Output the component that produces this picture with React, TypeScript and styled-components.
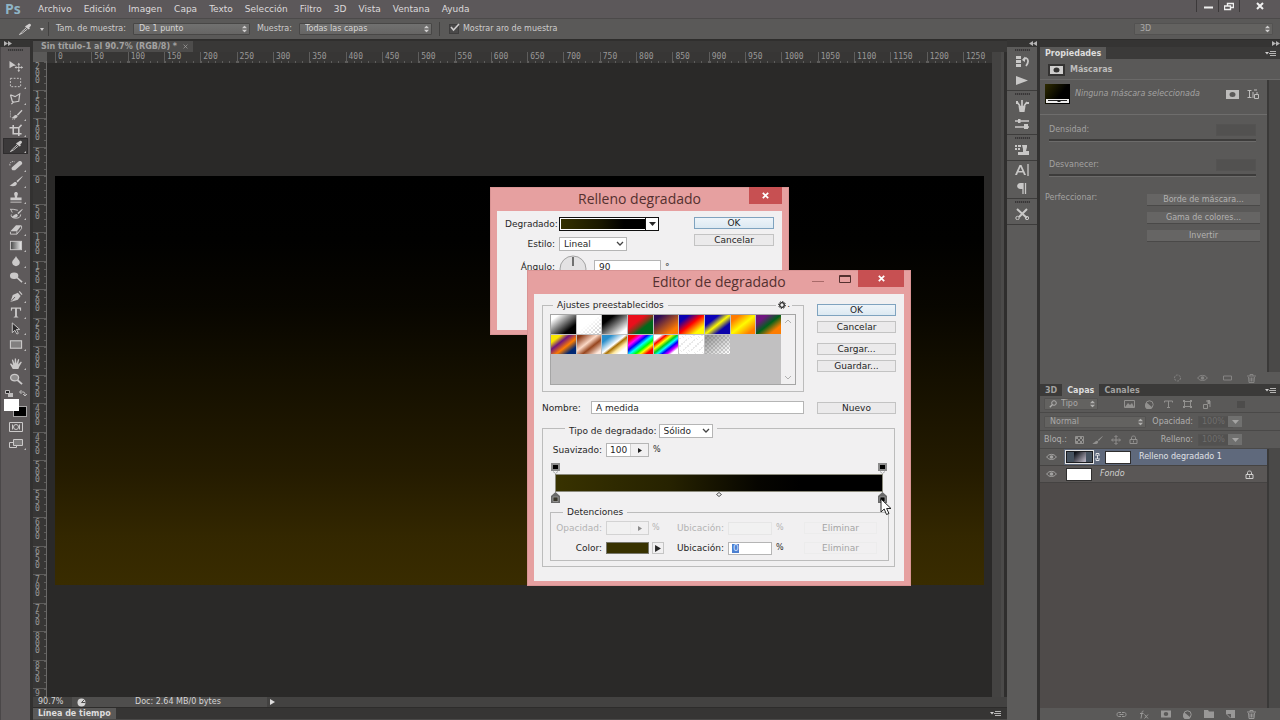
import React from "react";
import styled, { createGlobalStyle, css } from "styled-components";

const Global = createGlobalStyle`
  *, *::before, *::after { box-sizing: border-box; }
  html, body { margin: 0; padding: 0; background: #2a2928; }
  body, button, input, select, fieldset, legend {
    font-family: "DejaVu Sans", Verdana, sans-serif;
    font-size: 8px;
    line-height: 10px;
  }
  button { border: 0; padding: 0; background: none; color: inherit; }
  fieldset { margin: 0; min-width: 0; }
  svg { display: block; flex: none; }
`;

/* ---------- application frame ---------- */

const Shell = styled.div`
  position: relative;
  min-height: 100vh;
  display: flex;
  flex-direction: column;
  color: #cfcdcd;
  background: #353433;
  overflow: hidden;
`;

const MenuBar = styled.header`
  display: flex;
  align-items: center;
  height: 18px;
  padding-left: 5px;
  background: #5c585a;
`;

const Logo = styled.span`
  width: 33px;
  font: 700 14px/16px "Open Sans", "Noto Sans", sans-serif;
  color: #8fb4c6;
`;

const Menus = styled.nav`
  display: flex;
  flex: 1;
  gap: 12px;
`;

const MenuButton = styled.button`
  font-size: 9px;
  line-height: 12px;
  color: #dcdada;
`;

const WindowButton = styled.button<{ $w: number }>`
  display: flex;
  justify-content: center;
  width: ${(p) => p.$w}px;
  height: 12px;
  margin-bottom: 6px;
  border-left: 1px solid #3c393a;
  color: #f0f0f0;
`;

const OptionsBar = styled.div`
  display: flex;
  align-items: center;
  height: 22px;
  padding: 0 7px 0 5px;
  background: #5a5958;
  border-top: 1px solid #4c4a4a;
  border-bottom: 1px solid #2e2d2c;
`;

const Divider = styled.i`
  width: 1px;
  height: 14px;
  background: #424140;
`;

const OptionTool = styled.button`
  display: flex;
  align-items: center;
  gap: 7px;
  width: 43px;
  padding-left: 12px;
`;

const OptionLabel = styled.label`
  display: flex;
  align-items: center;
  gap: 7px;
  margin-left: 7px;
  white-space: nowrap;
`;

const CheckLabel = styled.label`
  display: flex;
  align-items: center;
  gap: 4px;
  margin-left: 9px;
  white-space: nowrap;
`;

const Check = styled.input`
  appearance: none;
  width: 10px;
  height: 10px;
  margin: 0;
  background: #4a4949;
  border: 1px solid #3e3d3d;
`;

const CheckBox = styled.span`
  position: relative;
  display: flex;
  svg { position: absolute; left: 1px; top: -1px; pointer-events: none; }
`;

const SelectWrap = styled.span<{ $w: number }>`
  position: relative;
  display: inline-flex;
  width: ${(p) => p.$w}px;
  svg { position: absolute; right: 3px; top: 50%; transform: translateY(-50%); pointer-events: none; }
`;

const LensBox = styled.span`
  svg { right: auto; left: 5px; }
`;

const DarkSelect = styled.select<{ $dim?: boolean; $pad?: number }>`
  appearance: none;
  width: 100%;
  height: 12px;
  padding: 0 0 0 ${(p) => p.$pad ?? 5}px;
  border: 1px solid ${(p) => (p.$dim ? "#535251" : "#484746")};
  border-radius: 1px;
  background: ${(p) => (p.$dim ? "#636260" : "linear-gradient(#717170, #666564)")};
  color: ${(p) => (p.$dim ? "#a9a8a7" : "#d6d5d5")};
  opacity: 1;
`;

const Spacer = styled.span` flex: 1; `;

const Workspace = styled.div`
  flex: 1;
  display: flex;
  min-height: 680px;
`;

const DockHeader = styled.div`
  display: flex;
  justify-content: flex-end;
  align-items: center;
  height: 7px;
  background: #353433;
  color: #b5b4b4;
`;

/* ---------- tool column ---------- */

const ToolDock = styled.aside`
  display: flex;
  flex-direction: column;
  width: 33px;
  border-right: 3px solid #323130;
  ${DockHeader} { justify-content: flex-start; padding-left: 4px; }
`;

const ToolBody = styled.div`
  flex: 1;
  display: flex;
  flex-direction: column;
  align-items: center;
  background: #5e5a5b;
  border-left: 1px solid #4a4748;
`;

const Grip = styled.i`
  width: 15px;
  height: 2px;
  margin: 2px 0;
  background: repeating-linear-gradient(90deg, #383737 0 1px, #514e4f 1px 2px);
`;

const ToolGroup = styled.div`
  display: flex;
  flex-direction: column;
  padding-bottom: 3px;
  &:first-of-type { padding-top: 5px; }
`;

const ToolButton = styled.button<{ $on?: boolean; $plain?: boolean }>`
  position: relative;
  display: flex;
  align-items: center;
  justify-content: center;
  width: 25px;
  height: 16px;
  color: #cbc9c9;
  ${(p) => p.$on && css`background: #3b393a; box-shadow: inset 0 0 0 1px #2f2d2e;`}
  &::after {
    content: "";
    display: ${(p) => (p.$plain ? "none" : "block")};
    position: absolute;
    right: 2px;
    bottom: 1px;
    border: 1px solid #bdbbbb;
    border-left-color: transparent;
    border-top-color: transparent;
  }
`;

const MiniRow = styled.div`
  display: flex;
  justify-content: space-between;
  width: 22px;
  height: 9px;
  color: #bdbbbb;
`;

const Colours = styled.div`
  display: grid;
  grid-template: 12px 6px / 9px 6px 8px;
  margin-bottom: 2px;
`;

const Chip = styled.button<{ $back?: boolean }>`
  background: ${(p) => (p.$back ? "#000" : "#fff")};
  grid-area: ${(p) => (p.$back ? "1 / 2 / 3 / 4" : "1 / 1 / 2 / 3")};
  ${(p) => p.$back ? css`margin-top: 7px; border: 1px solid #a8a6a6;` : css`z-index: 1;`}
`;

/* ---------- document ---------- */

const Doc = styled.main`
  flex: 1;
  min-width: 0;
  display: flex;
  flex-direction: column;
`;

const TabStrip = styled.div`
  display: flex;
  height: 12px;
  background: #393837;
  border-top: 1px solid #302f2e;
`;

const Tab = styled.div<{ $active?: boolean }>`
  display: flex;
  align-items: center;
  padding: 1px 5px 0;
  font-weight: 700;
  white-space: nowrap;
  background: ${(p) => (p.$active ? "#5a5958" : "transparent")};
  color: ${(p) => (p.$active ? "#dedddd" : "#a3a2a1")};
`;

const DocTab = styled(Tab)`
  gap: 6px;
  padding: 0 5px 0 8px;
  background: #4d4c4b;
`;

const DocArea = styled.div`
  flex: 1;
  display: grid;
  grid-template-columns: 14px 1fr 15px;
  grid-template-rows: 11px 1fr;
`;

const RulerCorner = styled.div` background: #5a5958; `;

const HRuler = styled.div`
  display: grid;
  grid-template-columns: 8px repeat(25, 1fr) 29px;
  background: #373635;
  color: #999897;
  font-family: "DejaVu Sans Mono", monospace;
  overflow: hidden;
`;

const HMark = styled.span`
  padding-left: 2px;
  line-height: 10px;
  border-left: 1px solid #5e5d5c;
  background: repeating-linear-gradient(90deg, #5e5d5c 0 1px, transparent 1px 7px) 0 100% / 100% 2px no-repeat;
`;

const VRuler = styled.div`
  display: grid;
  grid-template-rows: repeat(22, 1fr) 9px;
  margin-top: -2px;
  background: #373635;
  border-right: 1px solid #6a6968;
  color: #999897;
  font-family: "DejaVu Sans Mono", monospace;
  text-align: center;
`;

const VMark = styled.span`
  display: flex;
  flex-direction: column;
  align-items: center;
  padding: 1px 4px 0 0;
  line-height: 7px;
  border-top: 1px solid #5e5d5c;
  background: repeating-linear-gradient(#5e5d5c 0 1px, transparent 1px 7px) 100% 0 / 2px 100% no-repeat;
`;

const Viewport = styled.div`
  display: flex;
  padding: 113px 8px 112px;
  background: #2a2928;
`;

const Artboard = styled.div`
  flex: 1;
  background: linear-gradient(#000 0%, #010100 16%, #080600 32%, #151000 50%, #241b00 72%, #332700 88%, #392c00 100%);
`;

const Gutter = styled.div`
  grid-row: 1 / 3;
  grid-column: 3;
  background: linear-gradient(90deg, #444342 0 9px, #4b4a49 9px 12px, #2f2e2d 12px);
`;

const StatusBar = styled.div`
  display: flex;
  align-items: center;
  height: 11px;
  padding-left: 5px;
  background: #434241;
  border-bottom: 1px solid #2d2c2b;
`;

const Zoom = styled.span` width: 34px; color: #d5d4d4; `;

const StatusInfo = styled.div`
  display: flex;
  align-items: center;
  width: 195px;
  height: 10px;
  padding-left: 5px;
  background: #4f4e4d;
  color: #d5d4d4;
  span { margin-left: 49px; }
`;

const StatusArrow = styled.button`
  display: flex;
  justify-content: center;
  width: 11px;
  color: #dedddd;
`;

const Timeline = styled.div`
  display: flex;
  align-items: stretch;
  justify-content: space-between;
  height: 12px;
  padding-right: 6px;
  background: #363534;
  border-bottom: 1px solid #4a4948;
`;

/* ---------- icon strip ---------- */

const Strip = styled.aside`
  display: flex;
  flex-direction: column;
  width: 33px;
  border-right: 3px solid #323130;
`;

const StripBody = styled.div`
  flex: 1;
  background: #5c5b5a;
`;

const StripGroup = styled.div`
  display: flex;
  flex-direction: column;
  align-items: center;
  padding-bottom: 1px;
  border-bottom: 1px solid #3d3c3b;
`;

const StripButton = styled.button`
  display: flex;
  align-items: center;
  justify-content: center;
  width: 24px;
  height: 18px;
  color: #c9c8c7;
`;

/* ---------- right panels ---------- */

const Panels = styled.aside`
  display: flex;
  flex-direction: column;
  width: 240px;
`;

const PanelTabs = styled.div`
  display: flex;
  align-items: stretch;
  height: 12px;
  padding-right: 4px;
  background: #3b3a39;
  button { margin-left: auto; }
`;

const PanelTitle = styled.h2`
  display: flex;
  align-items: center;
  gap: 5px;
  height: 21px;
  margin: 0;
  padding: 1px 0 0 8px;
  font-size: 8px;
  color: #bdbcbb;
  background: #5a5958;
  border-bottom: 1px solid #6a6968;
`;

const WithScroll = styled.div<{ $h?: number }>`
  display: grid;
  grid-template-columns: 1fr 13px;
  ${(p) => (p.$h ? css`height: ${p.$h}px;` : css`flex: 1;`)}
  background: linear-gradient(90deg, #3a3938 0 2px, #4a4948 2px) 100% 0 / 13px 100% no-repeat ${(p) => (p.$h ? "#5a5958" : "#4f4b4a")};
`;

const Props = styled.section`
  display: flex;
  flex-direction: column;
  color: #a3a2a1;
`;

const MaskRow = styled.div`
  display: flex;
  align-items: center;
  height: 35px;
  padding: 0 5px 6px 5px;
  border-bottom: 1px solid #6e6d6c;
  em { flex: 1; margin-left: 5px; white-space: nowrap; }
`;

const IconButton = styled.button`
  display: flex;
  align-items: center;
  justify-content: center;
  width: 20px;
  color: #bdbcbb;
`;

const SliderRow = styled.div`
  display: flex;
  flex-wrap: wrap;
  align-items: center;
  justify-content: space-between;
  height: 18px;
  margin: 9px 11px 8px 9px;
`;

const DarkField = styled.input<{ $w: number }>`
  width: ${(p) => p.$w}px;
  height: 12px;
  padding: 0 3px;
  border: 1px solid #545352;
  background: #525150;
  color: #6f6e6d;
`;

const Range = styled.input`
  appearance: none;
  width: 100%;
  height: 3px;
  margin: 2px 0 0;
  background: #3d3c3b;
  border-bottom: 1px solid #6c6b6a;
  &::-webkit-slider-thumb { appearance: none; width: 0; height: 0; }
`;

const Refine = styled.div`
  display: flex;
  justify-content: space-between;
  margin: 8px 7px 0 5px;
`;

const RefineButtons = styled.div`
  display: grid;
  gap: 6px;
  width: 113px;
  margin-top: 1px;
`;

const DarkButton = styled.button`
  height: 12px;
  background: #666564;
  border-bottom: 1px solid #4a4948;
  color: #b3b2b1;
`;

const PanelFoot = styled.div<{ $gap: number; $right: number; $dim?: boolean }>`
  display: flex;
  align-items: center;
  justify-content: flex-end;
  gap: ${(p) => p.$gap}px;
  height: 12px;
  padding-right: ${(p) => p.$right}px;
  color: ${(p) => (p.$dim ? "#858483" : "#999897")};
  background: #5a5958;
`;

const LayerBar = styled.div<{ $h?: number }>`
  display: flex;
  align-items: center;
  height: ${(p) => p.$h ?? 18}px;
  padding: 0 4px;
  color: #b0afae;
  background: #5a5958;
  border-bottom: 1px solid #4a4948;
`;

const BarIcons = styled.div<{ $gap: number; $left: number }>`
  display: flex;
  align-items: center;
  gap: ${(p) => p.$gap}px;
  margin-left: ${(p) => p.$left}px;
  color: #92918f;
`;

const FilterSwitch = styled.button`
  width: 8px;
  height: 7px;
  margin: 0 31px 0 auto;
  background: #4d4c4b;
`;

const Percent = styled.label`
  display: flex;
  align-items: center;
  gap: 5px;
  margin-left: auto;
  white-space: nowrap;
`;

const Drop = styled.button`
  display: flex;
  align-items: center;
  justify-content: center;
  width: 14px;
  height: 11px;
  margin: 0 34px 0 -5px;
  background: #70706f;
  color: #a5a4a3;
  z-index: 1;
`;

const LayerList = styled.ul`
  margin: 0;
  padding: 0;
  list-style: none;
`;

const Layer = styled.li<{ $on?: boolean }>`
  display: flex;
  align-items: center;
  height: 17px;
  background: ${(p) => (p.$on ? "linear-gradient(90deg, #5a5958 0 24px, #5f697c 24px)" : "#5a5756")};
  border-bottom: 1px solid #454342;
  color: ${(p) => (p.$on ? "#e0e2e6" : "#d0cfce")};
  button { width: 23px; display: flex; justify-content: center; color: #a3a2a1; }
`;

const Thumb = styled.span<{ $kind: "fill" | "mask" | "white" }>`
  width: ${(p) => (p.$kind === "fill" ? 29 : 26)}px;
  height: ${(p) => (p.$kind === "fill" ? 14 : 13)}px;
  margin-left: ${(p) => (p.$kind === "white" ? 3 : 2)}px;
  ${(p) => p.$kind === "mask" && css`margin-left: 4px;`}
  background: #fff;
  border: 1px solid #2f2e2e;
  ${(p) => p.$kind === "fill" && css`
    border: 1px solid #e4e4e4;
    box-shadow: inset 0 0 0 1px #1c1d20;
    background: linear-gradient(135deg, #10131a 10%, #b3aebc 90%) 8px 1px / 12px 10px no-repeat, #46525f;
  `}
`;

const LayerName = styled.span` margin-left: 8px; flex: 1; `;

const LayerLock = styled.span` margin-right: 13px; `;

/* ---------- dialogs ---------- */

const Dialog = styled.section<{ $x: number; $y: number; $w: number; $h: number }>`
  position: absolute;
  left: ${(p) => p.$x}px;
  top: ${(p) => p.$y}px;
  width: ${(p) => p.$w}px;
  height: ${(p) => p.$h}px;
  display: flex;
  flex-direction: column;
  padding: 0 7px 5px;
  background: #e6a0a0;
  box-shadow: inset 0 0 0 1px #d99494;
  color: #262626;
  font-size: 9px;
  button, input, select, legend, label { font-size: 9px; }
`;

const TitleBar = styled.div`
  position: relative;
  height: 24px;
  display: flex;
  justify-content: flex-end;
`;

const Title = styled.h1`
  position: absolute;
  inset: 0;
  margin: 0;
  font: 400 14px/24px "Open Sans", "Noto Sans", sans-serif;
  text-align: center;
  color: #54302f;
`;

const Caption = styled.button<{ $w: number; $close?: boolean }>`
  z-index: 1;
  display: flex;
  align-items: center;
  justify-content: center;
  width: ${(p) => p.$w}px;
  height: 17px;
  color: ${(p) => (p.$close ? "#fff" : "#54302f")};
  background: ${(p) => (p.$close ? "#c75052" : "transparent")};
`;

const FillBody = styled.div`
  flex: 1;
  display: flex;
  justify-content: space-between;
  padding: 6px 8px;
  background: #f1f0f1;
`;

const FillForm = styled.div`
  display: grid;
  grid-template-columns: 50px auto auto;
  grid-template-rows: 14px 14px 26px;
  gap: 6px 4px;
  align-items: center;
  justify-content: start;
  label { text-align: right; white-space: nowrap; }
`;

const Wide = styled.div`
  grid-column: 2 / 4;
  display: flex;
  align-items: center;
`;

const AngleRow = styled.div`
  grid-column: 1 / 4;
  align-self: start;
  display: flex;
  align-items: center;
  gap: 4px;
  margin-top: -2px;
  label { width: 50px; margin-bottom: 5px; }
  input { margin: 0 0 5px 3px; }
  span { margin-bottom: 5px; }
`;

const GradientPick = styled.button`
  display: flex;
  width: 100px;
  height: 14px;
  border: 1px solid #111;
  background: #fff;
  &::before {
    content: "";
    flex: 1;
    margin: 1px 0 1px 1px;
    background: linear-gradient(90deg, #343000, #1b1900 45%, #000 75%);
  }
`;

const PickArrow = styled.span`
  display: flex;
  align-items: center;
  justify-content: center;
  width: 13px;
  border-left: 1px solid #111;
`;

const LightSelect = styled.select`
  appearance: none;
  width: 100%;
  height: 14px;
  padding: 0 0 0 4px;
  border: 1px solid #b5b5b5;
  background: #fff;
  color: #262626;
`;

const Field = styled.input<{ $w?: number; $ghost?: boolean }>`
  width: ${(p) => (p.$w ? `${p.$w}px` : "100%")};
  min-width: 0;
  height: 13px;
  padding: 0 4px;
  border: 1px solid ${(p) => (p.$ghost ? "#e6e6e6" : "#b5b5b5")};
  background: ${(p) => (p.$ghost ? "#f1f1f1" : "#fff")};
  color: #262626;
`;

const Stack = styled.div<{ $w?: number; $top?: number }>`
  display: flex;
  flex-direction: column;
  gap: 5px;
  padding-top: ${(p) => p.$top ?? 0}px;
  ${(p) => p.$w && css`width: ${p.$w}px;`}
`;

const PushButton = styled.button<{ $main?: boolean; $ghost?: boolean; $after?: number }>`
  width: 100%;
  height: 12px;
  margin-bottom: ${(p) => p.$after ?? 0}px;
  border: 1px solid ${(p) => (p.$ghost ? "#ececec" : p.$main ? "#7fa3bf" : "#c3c3c3")};
  background: ${(p) => (p.$ghost ? "#f1f0f1" : p.$main ? "linear-gradient(#eef4f9, #dce9f2)" : "#ebeaeb")};
  color: ${(p) => (p.$ghost ? "#a5a5a5" : "#1e1e1e")};
  line-height: 9px;
`;

const EditorBody = styled.div`
  flex: 1;
  padding: 6px 8px 0;
  background: #f1f0f1;
`;

const EditorTop = styled.div`
  display: grid;
  grid-template-columns: 1fr 79px;
  gap: 13px;
`;

const Frame = styled.fieldset<{ $pad: string }>`
  position: relative;
  padding: ${(p) => p.$pad};
  border: 1px solid #bcbcbc;
`;

const Legend = styled.legend<{ $left: number; $h: number }>`
  display: flex;
  align-items: flex-start;
  gap: 2px;
  height: ${(p) => p.$h}px;
  margin-left: ${(p) => p.$left}px;
  padding: 0 4px;
  white-space: nowrap;
  label { padding-top: 2px; }
`;

const Gear = styled.button`
  position: absolute;
  right: 11px;
  top: -11px;
  display: flex;
  align-items: flex-end;
  gap: 1px;
  padding: 0 2px;
  background: #f1f0f1;
`;

const PresetBox = styled.div`
  display: grid;
  grid-template-columns: 1fr 14px;
  height: 71px;
  border: 1px solid #a5a5a5;
  background: #c1c0c1;
`;

const PresetGrid = styled.div`
  display: grid;
  grid-template-columns: repeat(9, 1fr);
  grid-auto-rows: 19px;
  gap: 1px;
  align-content: start;
`;

const Preset = styled.button<{ $bg: string }>` background: ${(p) => p.$bg}; `;

const PresetScroll = styled.div`
  display: flex;
  flex-direction: column;
  align-items: center;
  justify-content: space-between;
  padding: 4px 0;
  color: #b0b0b0;
  background: #f1f0f1;
`;

const NameRow = styled.div`
  display: grid;
  grid-template-columns: 45px 1fr;
  gap: 4px;
  align-items: center;
  margin-top: 9px;
`;

const Lower = styled.div` margin: 10px 1px 0 0; `;

const SmoothRow = styled.div`
  display: flex;
  align-items: center;
  gap: 4px;
  height: 14px;
  label { width: 52px; text-align: right; white-space: nowrap; }
`;

const Spin = styled.span<{ $w: number; $dim?: boolean }>`
  display: flex;
  width: ${(p) => p.$w}px;
  height: 14px;
  border: 1px solid ${(p) => (p.$dim ? "#d3d3d3" : "#b5b5b5")};
  color: ${(p) => (p.$dim ? "#8c8c8c" : "#1e1e1e")};
  input { flex: 1; height: 12px; padding: 0 2px 0 3px; border: 0; }
  button { width: 18px; display: flex; align-items: center; justify-content: center; background: #f1f0f1; border-left: 1px solid ${(p) => (p.$dim ? "#ececec" : "#d0d0d0")}; }
`;

const Ramp = styled.div` padding: 6px 2px 4px 1px; `;

const StopRow = styled.div`
  display: flex;
  justify-content: space-between;
  height: 11px;
`;

const RampBar = styled.div`
  height: 18px;
  margin: 0 4px;
  border: 1px solid #8b8a7c;
  background: linear-gradient(90deg, #383200, #262200 35%, #060500 62%, #000 75%);
`;

const StopGrid = styled.div`
  display: grid;
  grid-template-columns: 51px 58px 56px 44px 24px 73px;
  grid-auto-rows: 14px;
  gap: 6px 4px;
  align-items: center;
  label { text-align: right; white-space: nowrap; }
`;

const Muted = styled.label` color: #b3b3b3; `;
const MutedText = styled.span` color: #b3b3b3; `;

const Cell = styled.div`
  display: flex;
  align-items: center;
  gap: 3px;
`;

const ColourWell = styled.button`
  width: 43px;
  height: 12px;
  border: 1px solid #77776c;
  background: #383200;
`;

const ArrowBox = styled.button`
  display: flex;
  align-items: center;
  justify-content: center;
  width: 12px;
  height: 12px;
  border: 1px solid #c5c5c5;
`;

const Selected = styled(Field)`
  color: #cfe0ff;
  background: linear-gradient(90deg, transparent 3px, #4c7fd0 3px 10px, transparent 10px) 0 1px / 100% 9px no-repeat #fff;
`;

const Pointer = styled.svg`
  position: absolute;
  left: 353px;
  top: 228px;
`;

/* ---------- drawings ---------- */

const Svg = ({ w, h, vb, children }: { w: number; h: number; vb?: string; children: React.ReactNode }) => (
  <svg width={w} height={h} viewBox={vb ?? `0 0 ${w} ${h}`} fill="none" stroke="currentColor" strokeWidth="1" aria-hidden="true">
    {children}
  </svg>
);

const solid = { fill: "currentColor", stroke: "none" };

const UpDown = () => <Svg w={5} h={7}><path {...solid} d="M0 2.7 2.5 0 5 2.7zM0 4.3 2.5 7 5 4.3z" /></Svg>;
const Chevron = () => <Svg w={8} h={6}><path d="M1 1l3 3 3-3" stroke="#444" strokeWidth="1.3" /></Svg>;
const Down = () => <Svg w={7} h={4}><path {...solid} d="M0 0h7L3.500 4z" /></Svg>;
const Right = ({ s = 5 }: { s?: number }) => <Svg w={s} h={s + 1} vb="0 0 5 6"><path {...solid} d="M0 0l5 3-5 3z" /></Svg>;
const Double = ({ left }: { left?: boolean }) => (
  <Svg w={8} h={5}><path {...solid} d={left ? "M4 0v5L0 2.500zM8 0v5L4 2.500z" : "M0 0v5l4-2.500zM4 0v5l4-2.500z"} /></Svg>
);
const FlyOut = () => (
  <Svg w={11} h={7}><path {...solid} d="M0 2h4L2 4.500z" /><path d="M5 1.500h6M4 3.500h7M5 5.500h6" stroke="#b5b4b3" /></Svg>
);
const Cross = ({ s = 7, t = 1.7 }: { s?: number; t?: number }) => (
  <Svg w={s} h={s} vb="0 0 7 7"><path d="M.8.8l5.400 5.400M6.200.8L.8 6.200" strokeWidth={t} /></Svg>
);

const toolArt: Record<string, React.ReactNode> = {
  Mover: <><path {...solid} d="M1 1l7 5-3 .4L1 9z" /><path d="M11 4v8M7 8h8" /><path {...solid} d="M11 3l1.500 2h-3zM11 13l1.500-2h-3zM15.500 8l-2-1.500v3zM6.500 8l2-1.500v3z" /></>,
  Marco: <rect x="2" y="2.500" width="11" height="9" strokeDasharray="2 1.500" />,
  Lazo: <path d="M2 3l5 2 5-3-1 8-6 1-2 2M2 3l2 7 1.500 1" strokeWidth="1.300" />,
  "Selección rápida": <><path d="M2 3v8M4 12h4" strokeDasharray="1 1" /><path {...solid} d="M14 2L9 7l1 1.300L15 3zM8.500 7.500c-3 0-3 2.500-5.500 3 2 1.500 6 1 6.800-1.600z" /></>,
  Recortar: <path d="M5 1v9.500h9M1 4h10v9M11 4l3-3" strokeWidth="1.700" />,
  Cuentagotas: <><path {...solid} d="M10 2.500L12 1c1.500-.8 3 .6 2.300 2L12.500 5l.8.900-1.300 1L8 4l1-1z" /><path d="M9.500 5L4 10l-2 2.500L5 11l5.500-4.500" /></>,
  Corrector: <><path {...solid} d="M4 8.500l7-6c2-1.500 5 1.500 3 3.500l-7 6C4 13 2 10.500 4 8.500z" /><path d="M1.500 7c-1-3 2-5 5-4" strokeDasharray="1.500 1" /></>,
  Pincel: <path {...solid} d="M15 1L8.500 6.500l1.300 1.500L15 2zM8 7.500C5 7 4.500 10.500 1 11c2.500 2 8 1.500 8-2z" />,
  Tampón: <><path {...solid} d="M6 3c0-2.500 4-2.500 4 0 0 1.500-.8 2-.8 4H14v3H2V7h4.800C6.800 5 6 4.500 6 3z" /><path d="M2 12h12" /></>,
  Historial: <><path {...solid} d="M15 2L9.500 6.500l1.200 1.300L15 3zM9 7.500C6 7 5.500 10 3 10.500c2 1.700 7 1.500 7-1.500z" /><path d="M2 2.500h3l5 1M2 2l2 4M3 8c-1 3 2 4 5 4s5-1 5-4" /></>,
  Borrador: <><path {...solid} d="M2 9l6-6.500h6L9 9z" /><path d="M2 9.500v2.500h7l5-6V3M9 9v3" /></>,
  Degradado: <><defs><linearGradient id="toolGrad"><stop stopColor="#444" /><stop offset="1" stopColor="#eee" /></linearGradient></defs><rect x="2" y="2.500" width="12" height="9" fill="url(#toolGrad)" /></>,
  Desenfocar: <path {...solid} d="M8 1c1 3 5 5 4 8-1 4-7 4-8 0C3 6 7 4 8 1z" />,
  Sobreexponer: <><ellipse {...solid} cx="6" cy="5" rx="4.500" ry="3.500" /><path d="M9 7l5.500 5" strokeWidth="1.800" /></>,
  Pluma: <><path {...solid} d="M2 13L4.500 5.500 10 3l3 3.500-3 4zM11 2l1-1 3 3.500-1 1z" /><path d="M2.500 12.500l4.500-5" stroke="#5e5a5b" /></>,
  Texto: <path {...solid} d="M2.500 1.500h11V5h-1L12 3H9v8l1.500.8v.7h-5v-.7L7 11V3H4l-.5 2h-1z" />,
  Trazado: <path d="M4 1v10.500l2.800-2.600L9 13l1.500-.8L8.500 8H12z" fill="#2e2c2d" />,
  Rectángulo: <rect x="2" y="3" width="12" height="8" fill="#828080" strokeWidth="1.200" />,
  Mano: <path {...solid} d="M4.500 13L1.500 7.500l1-.8L5 9 3.500 3l1.200-.4L6.500 7 6.700 1.500H8L8.500 7l1.800-4.800 1.200.4L10.300 8l3-3.200 1 .8-2.800 5-1 2.400z" />,
  Zoom: <><ellipse cx="6.500" cy="5" rx="4.300" ry="3.500" fill="#8f8d8d" strokeWidth="1.400" /><path d="M9.500 7.500l5 4.500" strokeWidth="2" /></>,
};

const ToolIcon = ({ name }: { name: string }) => <Svg w={16} h={13} vb="0 0 16 14">{toolArt[name]}</Svg>;

const groups = [
  ["Mover", "Marco", "Lazo", "Selección rápida", "Recortar", "Cuentagotas"],
  ["Corrector", "Pincel", "Tampón", "Historial", "Borrador", "Degradado", "Desenfocar", "Sobreexponer"],
  ["Pluma", "Texto", "Trazado", "Rectángulo"],
  ["Mano", "Zoom"],
];

const MaskIcon = ({ w = 13, h = 9 }: { w?: number; h?: number }) => (
  <Svg w={w} h={h} vb="0 0 13 9"><path {...solid} fillRule="evenodd" d="M0 0h13v9H0zM6.500 2a3 2.500 0 100 5 3 2.500 0 000-5z" /></Svg>
);
const Eye = () => (
  <Svg w={11} h={8}><path d="M.7 4c2-3.500 7.600-3.500 9.600 0-2 3.300-7.600 3.300-9.600 0z" /><circle {...solid} cx="5.500" cy="4" r="1.800" /></Svg>
);
const Lock = () => <Svg w={9} h={9}><path d="M2.500 4V2.500c0-2 4-2 4 0V4M1 4.500h7v4H1zM4.500 5.500v2" /></Svg>;
const Lens = () => <Svg w={8} h={8}><circle cx="5" cy="3" r="2.300" /><path d="M3.500 4.500L.8 7.200" strokeWidth="1.300" /></Svg>;
const Adjust = () => <Svg w={9} h={9}><circle cx="4.500" cy="4.500" r="3.700" /><path {...solid} d="M1.500 2.500l6 5A4 4 0 111.500 2.500z" /></Svg>;
const Trash = () => <Svg w={9} h={9}><path d="M0 2h9M3 2V.5h3V2M1.500 3l.5 5.500h5L7.500 3M4.500 3.500v4M3 3.500v4M6 3.500v4" /></Svg>;
const TextT = () => <Svg w={9} h={8}><path d="M.5 2.500V1h8v1.500M4.500 1v6.500M3 7.500h3" /></Svg>;
const Star = () => <Svg w={9} h={8}><path d="M1.500 1.500h6v5h-6z" /><path {...solid} d="M0 0h2v2H0zM7 0h2v2H7zM0 6h2v2H0zM7 6h2v2H7z" /></Svg>;
const Picture = () => <Svg w={11} h={8}><path d="M.5.5h10v7H.5z" /><path {...solid} d="M1 7l3-4 2 2 2-2 2 4z" /></Svg>;
const Smart = () => <Svg w={9} h={9}><path d="M1.500 4.500v4h4v-4zM4 1h4v6" /><path {...solid} d="M5.500 0H8v4H5.500z" /></Svg>;
const Brush = () => <Svg w={11} h={8} vb="1 1 14 11">{toolArt.Pincel}</Svg>;
const MoveCross = () => <Svg w={10} h={10}><path d="M5 1v8M1 5h8M3.500 2L5 .5 6.500 2M3.500 8L5 9.500 6.500 8M2 3.500L.5 5 2 6.500M8 3.500L9.500 5 8 6.500" /></Svg>;
const Checkers = () => <Svg w={9} h={8}><path {...solid} d="M1 1h2v2H1zM5 1h2v2H5zM3 3h2v2H3zM7 3h1v2H7zM1 5h2v2H1zM5 5h2v2H5z" /><path d="M.5.5h8v7h-8z" /></Svg>;

const stripArt: React.ReactNode[][] = [
  [
    <><path {...solid} d="M1 0h5v3H1zM1 4h5v3H1zM1 8h5v3H1z" /><path d="M8 4l3-2c3 1 2.500 5 0 8" strokeWidth="1.800" /><path {...solid} d="M7 4l3-3.500V6z" /></>,
    <path {...solid} d="M1 2l12 4.500L1 11z" />,
  ],
  [
    <><path {...solid} d="M3.500 6h7l-1 6h-5z" /><path d="M5 6L2 2M7 6V0M9 6l3-4" strokeWidth="1.700" /><path {...solid} d="M1 1h2v3H1zM11 2h3v2h-3z" /></>,
    <><path d="M0 3h14M0 9h14" strokeWidth="1.600" /><path {...solid} d="M3 1h2.500v4H3zM9 6h4v5H9z" /></>,
  ],
  [<><path {...solid} d="M0 1h2v2H0zM3 1h3v2H3zM0 4h2v2H0zM3 4h2v2H3zM7 1h5v2l-1 4h3v4H3V8h5V5z" /></>],
  [
    <><path {...solid} fillRule="evenodd" d="M0 11L4.500 1h2L11 11H9L8 8.500H3L2 11zM3.700 7h3.600L5.500 3z" /><path d="M13 0v12" strokeWidth="1.300" /></>,
    <><path {...solid} d="M8 1H5.500C1 1 1 7 5.500 7H8z" /><path d="M8 1v11M10.500 1v11" strokeWidth="1.300" /></>,
  ],
  [<><path d="M2 1l10 9M12 1L4 9" strokeWidth="2" /><circle cx="2.500" cy="10" r="1.700" /><circle cx="12" cy="10" r="1.700" /></>],
];

/* ---------- data ---------- */

const menus = ["Archivo", "Edición", "Imagen", "Capa", "Texto", "Selección", "Filtro", "3D", "Vista", "Ventana", "Ayuda"];
const hMarks = Array.from({ length: 26 }, (_, i) => i * 50);
const vMarks = [...Array.from({ length: 22 }, (_, i) => String(Math.abs(i * 50 - 200))), "9"];

const checker = "repeating-conic-gradient(#c9c9c9 0 25%, #fff 0 50%) 0 0 / 4px 4px";
const diag = (stops: string) => `linear-gradient(142deg, ${stops})`;
const presets: [string, string][] = [
  ["Frontal a fondo", diag("#fff 15%, #000 75%")],
  ["Frontal a transparente", `${diag("#fff 45%, #fff0 100%")}, ${checker}`],
  ["Negro, blanco", diag("#000 25%, #fff 85%")],
  ["Rojo, verde", diag("#ea0f1c 35%, #7a3a1a 52%, #00691a 65%")],
  ["Violeta, naranja", diag("#2b0a57 15%, #ff7a00 80%")],
  ["Azul, rojo, amarillo", diag("#0a00b2 20%, #ff0000 48%, #fffc00 80%")],
  ["Azul, amarillo, azul", diag("#0b01b8 28%, #fdfa00 50%, #0b02aa 72%")],
  ["Naranja, amarillo, naranja", diag("#ff7c00 18%, #fffb00 50%, #ff7c00 85%")],
  ["Violeta, verde, naranja", diag("#6f1580 22%, #00601b 50%, #fd7c00 78%")],
  ["Amarillo, violeta, naranja, azul", diag("#f9e600 20%, #6f1580 38%, #fd7c00 60%, #002874 82%")],
  ["Cobre", diag("#8a3a18 10%, #fbd8c5 42%, #97461f 62%, #ffe9dd 90%")],
  ["Cromo", diag("#298ecb 20%, #fff 48%, #a86f01 56%, #ffe9a0 70%, #fff 82%")],
  ["Espectro", diag("#f00 15%, #f0f 28%, #00f 40%, #0ff 52%, #0f0 64%, #ff0 74%, #f00 86%")],
  ["Arco iris transparente", diag("#fff 15%, #f00 25%, #ff0 37%, #0c2 48%, #0ff 57%, #00f 67%, #c0f 77%, #fff 86%")],
  ["Rayas transparentes", `repeating-linear-gradient(142deg, #fff 0 3px, #fff9 3px 5px), ${checker}`],
  ["Densidad neutra", `${diag("#777b 10%, #fff3 95%")}, ${checker}`],
];

/* ---------- parts ---------- */

function AppSelect({ w, value, label, dim, lens }: { w: number; value: string; label: string; dim?: boolean; lens?: boolean }) {
  return (
    <SelectWrap $w={w}>
      <DarkSelect aria-label={label} $dim={dim} $pad={lens ? 16 : 5} disabled={dim}><option>{value}</option></DarkSelect>
      {lens && <LensBox><Lens /></LensBox>}
      <UpDown />
    </SelectWrap>
  );
}

function Tools() {
  return (
    <ToolDock>
      <DockHeader><Double /></DockHeader>
      <ToolBody>
        <Grip />
        {groups.map((g, i) => (
          <ToolGroup key={i}>
            {g.map((n) => (
              <ToolButton key={n} aria-label={n} $on={n === "Cuentagotas"} $plain={n === "Zoom" || n === "Mover"}>
                <ToolIcon name={n} />
              </ToolButton>
            ))}
          </ToolGroup>
        ))}
        <MiniRow>
          <Svg w={8} h={7}><path {...solid} d="M3 3h5v4H3z" /><path d="M.5.5h4v3h-4z" fill="#222" /></Svg>
          <Svg w={8} h={7}><path d="M1 2h3c2 0 2 1 2 4M2.500 0L.5 2l2 2M4 4l2 2 2-2" /></Svg>
        </MiniRow>
        <Colours><Chip aria-label="Color frontal" /><Chip $back aria-label="Color de fondo" /></Colours>
        <ToolButton aria-label="Máscara rápida" $plain><Svg w={14} h={10}><path d="M.5.5h13v9H.5z" /><circle cx="7" cy="5" r="2.500" /><path d="M3.500 2.500v5M10.500 2.500v5" /></Svg></ToolButton>
        <ToolButton aria-label="Modo de pantalla"><Svg w={14} h={9}><path d="M.5 3.500h7v5h-7z" /><path d="M4.500.5h9v6h-9z" fill="#7c7a7a" /></Svg></ToolButton>
      </ToolBody>
    </ToolDock>
  );
}

function DocumentArea() {
  return (
    <Doc>
      <TabStrip><DocTab><span>Sin título-1 al 90.7% (RGB/8) *</span><button aria-label="Cerrar pestaña"><Cross s={5} t={1} /></button></DocTab></TabStrip>
      <DocArea>
        <RulerCorner />
        <HRuler><i />{hMarks.map((m) => <HMark key={m}>{m}</HMark>)}</HRuler>
        <Gutter />
        <VRuler>{vMarks.map((m, i) => <VMark key={i}>{m.split("").map((d, k) => <span key={k}>{d}</span>)}</VMark>)}</VRuler>
        <Viewport><Artboard /></Viewport>
      </DocArea>
      <StatusBar>
        <Zoom>90.7%</Zoom>
        <StatusInfo><Svg w={9} h={9}><circle {...solid} cx="4.500" cy="4.500" r="4" /><path d="M4.500 4.500h4M4.500 4.500l3-3" stroke="#4f4e4d" /></Svg><span>Doc: 2.64 MB/0 bytes</span></StatusInfo>
        <StatusArrow aria-label="Más información"><Right /></StatusArrow>
      </StatusBar>
      <Timeline><Tab $active>Línea de tiempo</Tab><button aria-label="Menú de línea de tiempo"><FlyOut /></button></Timeline>
    </Doc>
  );
}

function RightPanels() {
  return (
    <Panels>
      <DockHeader><Double /></DockHeader>
      <PanelTabs><Tab $active>Propiedades</Tab><button aria-label="Menú de propiedades"><FlyOut /></button></PanelTabs>
      <PanelTitle><Svg w={17} h={12}><path fill="#343332" stroke="none" d="M0 0h17v12H0z" /><path fill="#cfcecd" stroke="none" fillRule="evenodd" d="M2 2h13v8H2zM8.500 3.500a3 2.500 0 100 5 3 2.500 0 000-5z" /></Svg>Máscaras</PanelTitle>
      <WithScroll $h={292}>
        <Props>
          <MaskRow>
            <Svg w={25} h={20}>
              <defs><linearGradient id="maskGrad" y2="0.6"><stop stopColor="#2f2c00" /><stop offset=".7" stopColor="#000" /></linearGradient></defs>
              <path fill="url(#maskGrad)" stroke="none" d="M0 0h25v20H0z" /><path fill="#eee" stroke="none" d="M1 15h23v4H1z" /><path fill="#222" stroke="none" d="M3 16h19v1H3zM12 18l2-2 2 2z" />
            </Svg>
            <em>Ninguna máscara seleccionada</em>
            <IconButton aria-label="Máscara de píxeles"><MaskIcon /></IconButton>
            <IconButton aria-label="Máscara vectorial"><Svg w={13} h={10}><path d="M1.500 1.500h4M1.500 8.500h4M3.500 1v8M8 1l3 0M8.500 5.500h4v4h-4zM7 3v6M11 3v2" /></Svg></IconButton>
          </MaskRow>
          <SliderRow><label htmlFor="den">Densidad:</label><DarkField $w={40} aria-label="Valor de densidad" disabled /><Range id="den" type="range" disabled /></SliderRow>
          <SliderRow><label htmlFor="des">Desvanecer:</label><DarkField $w={40} aria-label="Valor de desvanecer" disabled /><Range id="des" type="range" disabled /></SliderRow>
          <Refine>
            <span>Perfeccionar:</span>
            <RefineButtons><DarkButton>Borde de máscara...</DarkButton><DarkButton>Gama de colores...</DarkButton><DarkButton>Invertir</DarkButton></RefineButtons>
          </Refine>
        </Props>
      </WithScroll>
      <PanelFoot $gap={15} $right={24} $dim>
        <Svg w={9} h={8}><circle cx="4.500" cy="4" r="3" strokeDasharray="2 1" /></Svg><Eye /><Svg w={9} h={6}><path d="M.5 1h8v4h-8z" /></Svg><Trash />
      </PanelFoot>
      <PanelTabs><Tab>3D</Tab><Tab $active>Capas</Tab><Tab>Canales</Tab><button aria-label="Menú de capas"><FlyOut /></button></PanelTabs>
      <LayerBar $h={17}>
        <AppSelect w={54} value="Tipo" label="Filtrar capas" dim lens />
        <BarIcons $gap={10} $left={26}><Picture /><Adjust /><TextT /><Star /><Smart /></BarIcons>
        <FilterSwitch aria-label="Activar filtro de capas" />
      </LayerBar>
      <LayerBar>
        <AppSelect w={102} value="Normal" label="Modo de fusión" dim />
        <Percent>Opacidad:<DarkField $w={35} defaultValue="100%" disabled /></Percent>
        <Drop aria-label="Ajustar opacidad"><Down /></Drop>
      </LayerBar>
      <LayerBar>
        <span>Bloq.:</span>
        <BarIcons $gap={8} $left={8}><Checkers /><Brush /><MoveCross /><Lock /></BarIcons>
        <Percent>Relleno:<DarkField $w={35} defaultValue="100%" disabled /></Percent>
        <Drop aria-label="Ajustar relleno"><Down /></Drop>
      </LayerBar>
      <WithScroll>
        <LayerList>
          <Layer $on>
            <button aria-label="Visibilidad de Relleno degradado 1"><Eye /></button><Thumb $kind="fill" />
            <Svg w={7} h={10}><path d="M2 4V1.500h3V4M2 6v2.500h3V6M3.500 3v4" /></Svg><Thumb $kind="mask" /><LayerName>Relleno degradado 1</LayerName>
          </Layer>
          <Layer>
            <button aria-label="Visibilidad de Fondo"><Eye /></button><Thumb $kind="white" /><LayerName><em>Fondo</em></LayerName><LayerLock><Lock /></LayerLock>
          </Layer>
        </LayerList>
      </WithScroll>
      <PanelFoot $gap={12} $right={24}>
        <Svg w={11} h={7}><path d="M5 1.500H2.500c-2 0-2 4 0 4H5M6 1.500h2.500c2 0 2 4 0 4H6M3.500 3.500h4" /></Svg>
        <Svg w={10} h={9}><path d="M4.500 1C3 1 3 2 2.800 4L2 8.500M1 3.500h3.500M5.500 4.500l3.500 4M9 4.500l-3.500 4" /></Svg>
        <MaskIcon w={10} h={8} /><Adjust />
        <Svg w={10} h={8}><path {...solid} d="M0 0h4l1 1.500h5V8H0z" /></Svg>
        <Svg w={9} h={8}><path {...solid} d="M0 0h9v8H5V4H0z" /><path d="M.5 4l4 4" /></Svg>
        <Trash />
      </PanelFoot>
    </Panels>
  );
}

function FillDialog() {
  return (
    <Dialog $x={490} $y={187} $w={299} $h={148} aria-label="Relleno degradado">
      <TitleBar><Title>Relleno degradado</Title><Caption $w={33} $close aria-label="Cerrar"><Cross /></Caption></TitleBar>
      <FillBody>
        <FillForm>
          <label htmlFor="grad">Degradado:</label>
          <Wide><GradientPick id="grad"><PickArrow><Down /></PickArrow></GradientPick></Wide>
          <label htmlFor="style">Estilo:</label>
          <Wide><SelectWrap $w={68}><LightSelect id="style"><option>Lineal</option></LightSelect><Chevron /></SelectWrap></Wide>
          <AngleRow>
            <label htmlFor="ang">Ángulo:</label>
            <Svg w={28} h={28}><circle cx="14" cy="14" r="13" fill="#e3e2e3" stroke="#a3a3a3" /><path d="M14 2v9" stroke="#333" strokeWidth="1.300" /></Svg>
            <Field id="ang" $w={67} defaultValue="90" /><span>°</span>
          </AngleRow>
        </FillForm>
        <Stack $w={80}><PushButton $main>OK</PushButton><PushButton>Cancelar</PushButton></Stack>
      </FillBody>
    </Dialog>
  );
}

const OpacityStop = () => <Svg w={9} h={11}><path fill="#8c8c8c" stroke="none" d="M0 0h9v8H0z" /><path fill="#000" stroke="none" d="M2 2h5v4H2z" /><path d="M2 8.500l2.500 2 2.500-2" stroke="#aaa" /></Svg>;
const ColourStop = ({ fill }: { fill: string }) => <Svg w={9} h={11}><path fill="#6a6a6a" stroke="none" d="M4.500 0L9 4v7H0V4z" /><path fill={fill} stroke="#aaa" strokeWidth=".7" d="M2 5h5v4.500H2z" /></Svg>;

function GradientEditor() {
  return (
    <Dialog $x={527} $y={270} $w={384} $h={316} aria-label="Editor de degradado">
      <TitleBar>
        <Title>Editor de degradado</Title>
        <Caption $w={28} aria-label="Minimizar"><Svg w={12} h={8}><path d="M0 6.500h12" stroke="#a86a69" /></Svg></Caption>
        <Caption $w={26} aria-label="Maximizar"><Svg w={12} h={8}><path d="M.5.5h11v7H.5zM0 1.500h12" /></Svg></Caption>
        <Caption $w={46} $close aria-label="Cerrar"><Cross /></Caption>
      </TitleBar>
      <EditorBody>
        <EditorTop>
          <div>
            <Frame $pad="4px 7px 6px">
              <Legend $left={3} $h={10}>Ajustes preestablecidos</Legend>
              <Gear aria-label="Opciones de ajustes"><Svg w={8} h={8}><circle cx="4" cy="4" r="2.300" strokeWidth="1.300" /><circle cx="4" cy="4" r="3.500" strokeDasharray="1.300 1.400" /></Svg>.</Gear>
              <PresetBox>
                <PresetGrid>{presets.map(([n, bg]) => <Preset key={n} $bg={bg} aria-label={n} />)}</PresetGrid>
                <PresetScroll><Svg w={8} h={5}><path d="M1 4l3-3 3 3" /></Svg><Svg w={8} h={5}><path d="M1 1l3 3 3-3" /></Svg></PresetScroll>
              </PresetBox>
            </Frame>
            <NameRow><label htmlFor="name">Nombre:</label><Field id="name" defaultValue="A medida" /></NameRow>
          </div>
          <Stack $top={4}>
            <PushButton $main>OK</PushButton><PushButton $after={5}>Cancelar</PushButton>
            <PushButton>Cargar...</PushButton><PushButton>Guardar...</PushButton><Spacer /><PushButton>Nuevo</PushButton>
          </Stack>
        </EditorTop>
        <Lower>
          <Frame $pad="11px 5px 5px 7px">
            <Legend $left={15} $h={8}>
              <label htmlFor="kind">Tipo de degradado:</label>
              <SelectWrap $w={54}><LightSelect id="kind"><option>Sólido</option></LightSelect><Chevron /></SelectWrap>
            </Legend>
            <SmoothRow><label htmlFor="smooth">Suavizado:</label><Spin $w={43}><Field id="smooth" defaultValue="100" /><button aria-label="Ajustar suavizado"><Right s={4} /></button></Spin><span>%</span></SmoothRow>
            <Ramp>
              <StopRow><OpacityStop /><OpacityStop /></StopRow>
              <RampBar />
              <StopRow><ColourStop fill="#38352a" /><Svg w={6} h={5}><path d="M3 .5l2.500 2L3 4.500.5 2.500z" stroke="#555" /></Svg><ColourStop fill="#000" /></StopRow>
            </Ramp>
            <Frame $pad="4px 0 5px">
              <Legend $left={12} $h={10}>Detenciones</Legend>
              <StopGrid>
                <Muted htmlFor="op">Opacidad:</Muted>
                <Cell><Spin $w={43} $dim><Field id="op" $ghost disabled /><button aria-label="Ajustar opacidad"><Right s={4} /></button></Spin><MutedText>%</MutedText></Cell>
                <Muted htmlFor="pos1">Ubicación:</Muted><Field id="pos1" $ghost disabled /><MutedText>%</MutedText><PushButton $ghost>Eliminar</PushButton>
                <label htmlFor="col">Color:</label>
                <Cell><ColourWell id="col" /><ArrowBox aria-label="Opciones de color"><Right s={6} /></ArrowBox></Cell>
                <label htmlFor="pos2">Ubicación:</label><Selected id="pos2" defaultValue="0" /><span>%</span><PushButton $ghost>Eliminar</PushButton>
              </StopGrid>
            </Frame>
          </Frame>
        </Lower>
      </EditorBody>
      <Pointer width="13" height="18" viewBox="0 0 13 18" aria-hidden="true"><path d="M1 1v13l3.200-3 2.300 5.500 2.500-1-2.400-5H11z" fill="#fff" stroke="#222" /></Pointer>
    </Dialog>
  );
}

export default function App() {
  return (
    <>
      <Global />
      <Shell>
        <MenuBar>
          <Logo>Ps</Logo>
          <Menus>{menus.map((m) => <MenuButton key={m}>{m}</MenuButton>)}</Menus>
          <WindowButton $w={22} aria-label="Minimizar"><Svg w={10} h={12}><path d="M1 7.500h9" strokeWidth="2" /></Svg></WindowButton>
          <WindowButton $w={21} aria-label="Restaurar"><Svg w={10} h={12}><path d="M3.500 6V3.500h6v4H7M.5 6h6v3.500h-6z" strokeWidth="1.400" /></Svg></WindowButton>
          <WindowButton $w={41} aria-label="Cerrar"><Svg w={8} h={12}><path d="M1 3l6 6M7 3L1 9" strokeWidth="2" /></Svg></WindowButton>
        </MenuBar>
        <OptionsBar>
          <OptionTool aria-label="Cuentagotas"><ToolIcon name="Cuentagotas" /><Svg w={4} h={3}><path {...solid} d="M0 0h4L2 3z" /></Svg></OptionTool>
          <Divider />
          <OptionLabel>Tam. de muestra:<AppSelect w={117} value="De 1 punto" label="Tam. de muestra" /></OptionLabel>
          <OptionLabel>Muestra:<AppSelect w={133} value="Todas las capas" label="Muestra" /></OptionLabel>
          <OptionLabel as="span"><Divider /></OptionLabel>
          <CheckLabel>
            <CheckBox><Check type="checkbox" defaultChecked /><Svg w={10} h={9}><path d="M1 4l2.500 3L9 1" strokeWidth="1.600" /></Svg></CheckBox>
            Mostrar aro de muestra
          </CheckLabel>
          <Spacer />
          <AppSelect w={139} value="3D" label="Espacio de trabajo" dim />
        </OptionsBar>
        <Workspace>
          <Tools />
          <DocumentArea />
          <Strip>
            <DockHeader><Double left /></DockHeader>
            <StripBody>
              {stripArt.map((g, i) => (
                <StripGroup key={i}>
                  {i !== 3 && <Grip />}
                  {g.map((a, k) => <StripButton key={k} aria-label={`Panel ${i + 1}.${k + 1}`}><Svg w={14} h={12}>{a}</Svg></StripButton>)}
                </StripGroup>
              ))}
            </StripBody>
          </Strip>
          <RightPanels />
        </Workspace>
        <FillDialog />
        <GradientEditor />
      </Shell>
    </>
  );
}
